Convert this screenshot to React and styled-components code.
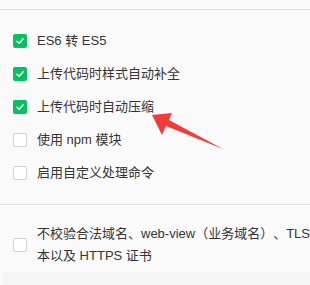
import React from "react";
import styled, { createGlobalStyle } from "styled-components";

const Global = createGlobalStyle`
  html, body { margin: 0; padding: 0; background: #fafafa; overflow: hidden; }
  body {
    font-family: "Liberation Sans", "Noto Sans CJK SC", sans-serif;
    color: #353535;
    text-spacing-trim: space-all;
  }
`;

const Page = styled.div`
  position: relative;
  width: 310px;
  height: 285px;
  overflow: hidden;
  background: #fafafa;
  display: flex;
  flex-direction: column;
`;

const TopStrip = styled.div`
  height: 9px;
  border-bottom: 1px solid #e2e2e2;
`;

const Section = styled.div`
  display: flex;
  flex-direction: column;
  padding: ${(p) => p.$pad};
  border-bottom: ${(p) => (p.$divider ? "1px solid #e2e2e2" : "none")};
`;

const Row = styled.label`
  display: flex;
  align-items: center;
  height: ${(p) => (p.$tall ? "auto" : "33px")};
  padding-left: 13px;
  gap: 10px;
  font-size: 13px;
  line-height: 22px;
  white-space: nowrap;
`;

const Box = styled.span`
  flex: none;
  width: 14px;
  height: 14px;
  box-sizing: border-box;
  border-radius: 2px;
  background: ${(p) => (p.$checked ? "#07c160" : "#ffffff")};
  border: ${(p) => (p.$checked ? "none" : "1px solid #d1d1d1")};
  display: flex;
  align-items: center;
  justify-content: center;
`;

const Wrapped = styled.span`
  width: 292px;
  flex: none;
  white-space: normal;
  text-spacing-trim: space-all;
`;

const Footer = styled.div`
  flex: 1;
  background: #f5f5f5;
  margin-left: 3px;
`;

const Arrow = styled.svg`
  position: absolute;
  left: 0;
  top: 0;
  pointer-events: none;
`;

function Check({ checked }) {
  return (
    <Box $checked={checked}>
      {checked && (
        <svg width="10" height="10" viewBox="0 0 10 10">
          <path d="M2 5.2 L4.2 7.3 L8 2.9" fill="none" stroke="#fff" strokeWidth="1.5" strokeLinecap="round" strokeLinejoin="round" />
        </svg>
      )}
    </Box>
  );
}

const items = [
  { label: "ES6 转 ES5", checked: true },
  { label: "上传代码时样式自动补全", checked: true },
  { label: "上传代码时自动压缩", checked: true },
  { label: "使用 npm 模块", checked: false },
  { label: "启用自定义处理命令", checked: false },
];

export default function App() {
  return (
    <Page>
      <Global />
      <TopStrip />
      <Section $pad="14px 0 15px" $divider>
        {items.map((it) => (
          <Row key={it.label}>
            <Check checked={it.checked} />
            <span>{it.label}</span>
          </Row>
        ))}
      </Section>
      <Section $pad="18px 0 5px">
        <Row $tall>
          <Check checked={false} />
          <Wrapped>不校验合法域名、web-view（业务域名）、TLS 版本以及 HTTPS 证书</Wrapped>
        </Row>
      </Section>
      <Footer />
      <Arrow width="310" height="285" viewBox="0 0 310 285">
        <polygon points="152,115 172,113 169,120 223,149 166,126 162,135" fill="#f23b3b" />
      </Arrow>
    </Page>
  );
}
